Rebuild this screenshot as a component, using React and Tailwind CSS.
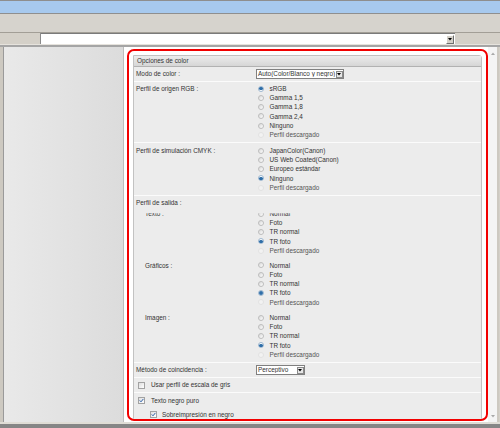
import React from 'react'

const Radio = ({ state }) => {
  if (state === 'on')
    return (
      <span className="w-[6px] h-[6px] rounded-full border border-[#9db6cf] bg-white flex items-center justify-center">
        <span className="w-[3.5px] h-[3.5px] rounded-full bg-[#2f6ea8]" />
      </span>
    )
  if (state === 'dis') return <span className="w-[6px] h-[6px] rounded-full border border-[#e2e2e2] bg-[#f2f2f2]" />
  return <span className="w-[6px] h-[6px] rounded-full border border-[#bdbdbd] bg-gradient-to-br from-[#d8d8d8] to-white" />
}

const Check = ({ checked }) => (
  <span className="w-[7px] h-[7px] border border-[#a2a2a2] bg-gradient-to-br from-[#dedede] to-white flex items-center justify-center">
    {checked ? (
      <svg width="5" height="5" viewBox="0 0 5 5">
        <path d="M0.7 2.4 L2 3.8 L4.4 0.9" fill="none" stroke="#2a5ea8" strokeWidth="1" />
      </svg>
    ) : null}
  </span>
)

const Arrow = ({ color = '#000' }) => (
  <svg width="4" height="3" viewBox="0 0 4 3">
    <path d="M0 0 H4 L2 2.5 Z" fill={color} />
  </svg>
)

const Select = ({ value, className }) => (
  <div className={`h-[10px] bg-white border border-[#808080] flex items-center ${className}`}>
    <span className="flex-1 pl-[1px] whitespace-nowrap overflow-hidden leading-none">{value}</span>
    <span className="w-[7px] h-[7px] mr-[0.5px] border border-[#8a8a8a] bg-[#e6e6e6] flex items-center justify-center">
      <Arrow />
    </span>
  </div>
)

const RadioList = ({ items, clipFirst }) => (
  <div className="flex flex-col">
    {items.map(([label, state], idx) => (
      <div
        key={label}
        className={
          idx === 0 && clipFirst
            ? 'h-[9.25px] flex items-center gap-[5.5px] pl-[2px] [clip-path:inset(45%_0_0_0)]'
            : 'h-[9.25px] flex items-center gap-[5.5px] pl-[2px]'
        }
      >
        <Radio state={state} />
        <span className={state === 'dis' ? 'text-[#555]' : ''}>{label}</span>
      </div>
    ))}
  </div>
)

const salida = [
  ['Normal', 'off'],
  ['Foto', 'off'],
  ['TR normal', 'off'],
  ['TR foto', 'on'],
  ['Perfil descargado', 'dis'],
]

export default function App() {
  return (
    <div className="w-[500px] h-[428px] overflow-hidden flex flex-col bg-[#d4d0c8] font-[Liberation_Sans,Arial,sans-serif] text-[6.4px] text-[#333]">
      <div className="h-[1px] bg-[#8e8e8e]" />
      <div className="h-[12px] bg-[#a7c9ee]" />
      <div className="h-[1px] bg-[#8f8f8f]" />
      <div className="h-[18px] bg-[#d6d3cd]" />
      <div className="h-[1px] bg-[#a29e96]" />
      <div className="h-[11px] flex">
        <div className="w-[41px] border-r border-[#8a8a8a] bg-[#d4d0c8]" />
        <div className="w-[414px] bg-white border-t border-[#7a7a7a] flex justify-end items-center pr-[1px]">
          <span className="w-[8px] h-[9px] border border-t-white border-l-white border-r-[#6f6f6f] border-b-[#6f6f6f] bg-[#d4d0c8] flex items-center justify-center">
            <Arrow />
          </span>
        </div>
        <div className="flex-1 bg-[#d4d0c8]" />
      </div>
      <div className="h-[1px] bg-[#e6e3dd]" />
      <div className="h-[2px] bg-[#a5a5a5]" />

      <div className="flex-1 min-h-0 flex">
        <div className="w-[4px] bg-[#cdc9c1] border-r border-[#9a9a9a]" />
        <div className="w-[120px] bg-gradient-to-r from-[#e9e9e9] to-[#dcdcdc] border-r border-[#bdbdbd]" />
        <div className="w-[364px] bg-white flex flex-col pl-[3px] pt-[2px] pb-[1px]">
          <div className="flex-1 min-h-0 border-2 border-[#f20000] rounded-[7px] pt-[4px] px-[4px] overflow-hidden">
            <div className="border border-[#c2c2c2] bg-[#ececec] rounded-tr-[3px]">
              <div className="h-[11px] pl-[3px] flex items-center bg-gradient-to-b from-[#ececec] to-[#d6d6d6] border-b border-[#b2b2b2]">
                Opciones de color
              </div>

              <div className="h-[15px] flex items-center border-b border-[#fbfbfb] pl-[2px]">
                <span className="w-[120px]">Modo de color :</span>
                <Select value="Auto(Color/Blanco y negro)" className="w-[88px]" />
              </div>

              <div className="h-[61px] flex pt-[2px] border-b border-[#fbfbfb] pl-[2px]">
                <span className="w-[120px] h-[9.25px] flex items-center">Perfil de origen RGB :</span>
                <RadioList
                  items={[
                    ['sRGB', 'on'],
                    ['Gamma 1,5', 'off'],
                    ['Gamma 1,8', 'off'],
                    ['Gamma 2,4', 'off'],
                    ['Ninguno', 'off'],
                    ['Perfil descargado', 'dis'],
                  ]}
                />
              </div>

              <div className="h-[53px] flex pt-[3px] border-b border-[#fbfbfb] pl-[2px]">
                <span className="w-[120px] h-[9.25px] flex items-center">Perfil de simulación CMYK :</span>
                <RadioList
                  items={[
                    ['JapanColor(Canon)', 'off'],
                    ['US Web Coated(Canon)', 'off'],
                    ['Europeo estándar', 'off'],
                    ['Ninguno', 'on'],
                    ['Perfil descargado', 'dis'],
                  ]}
                />
              </div>

              <div className="h-[167px] flex flex-col pt-[2.5px] border-b border-[#fbfbfb] pl-[2px]">
                <span className="h-[9.25px] flex items-center">Perfil de salida :</span>
                <div className="flex mt-[1.3px]">
                  <span className="w-[120px] pl-[9px] h-[9.25px] flex items-center [clip-path:inset(45%_0_0_0)]">Texto :</span>
                  <RadioList items={salida} clipFirst />
                </div>
                <div className="flex mt-[5.5px]">
                  <span className="w-[120px] pl-[9px] h-[9.25px] flex items-center">Gráficos :</span>
                  <RadioList items={salida} />
                </div>
                <div className="flex mt-[6px]">
                  <span className="w-[120px] pl-[9px] h-[9.25px] flex items-center">Imagen :</span>
                  <RadioList items={salida} />
                </div>
              </div>

              <div className="h-[15px] flex items-center border-b border-[#fbfbfb] pl-[2px]">
                <span className="w-[120px]">Método de coincidencia :</span>
                <Select value="Perceptivo" className="w-[49px]" />
              </div>

              <div className="h-[15px] flex items-center gap-[6px] border-b border-[#fbfbfb] pl-[4px]">
                <Check />
                <span>Usar perfil de escala de gris</span>
              </div>

              <div className="h-[15px] flex items-center gap-[6px] pl-[4px]">
                <Check checked />
                <span>Texto negro puro</span>
              </div>
              <div className="h-[13px] flex items-center gap-[5px] pl-[16px]">
                <Check checked />
                <span>Sobreimpresión en negro</span>
              </div>
            </div>
          </div>
        </div>
        <div className="w-[9px] bg-[#f4f4f4] flex flex-col justify-between items-center pt-[5px] pb-[4px]">
          <svg width="4" height="3" viewBox="0 0 4 3">
            <path d="M0 3 H4 L2 0.5 Z" fill="#a8a8a8" />
          </svg>
          <Arrow color="#a8a8a8" />
        </div>
        <div className="w-[2px] bg-[#cdc9c1]" />
      </div>

      <div className="h-[2px] bg-[#e0ddd6]" />
      <div className="h-[4px] bg-[#868686]" />
    </div>
  )
}
